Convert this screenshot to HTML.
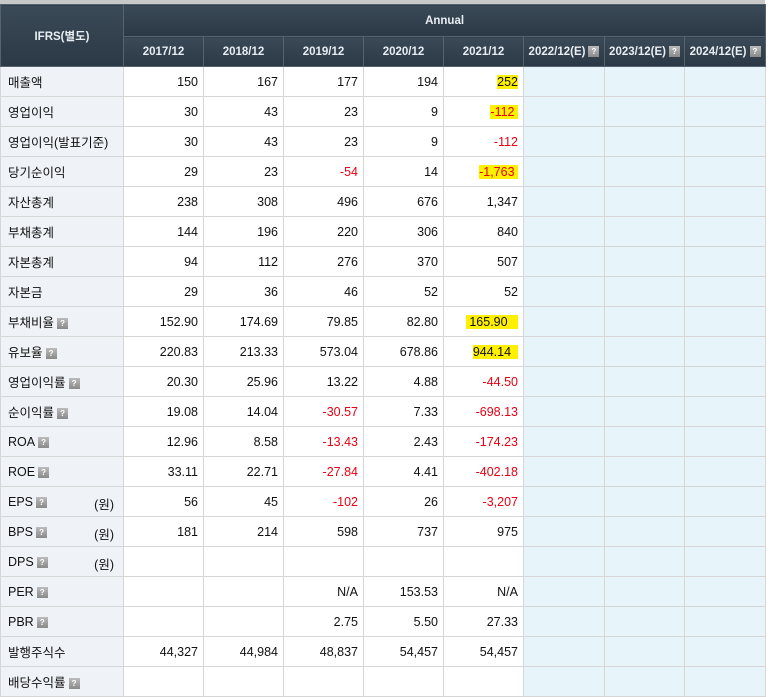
<!DOCTYPE html>
<html><head><meta charset="utf-8"><style>
body{margin:0;background:#fff;width:769px;height:696px;overflow:hidden;font-family:"Liberation Sans","Noto Sans CJK KR",sans-serif;}
.top{position:absolute;left:0;top:0;width:765px;height:4px;background:#c9c9c9}
table{position:absolute;left:0;top:4px;border-collapse:collapse;table-layout:fixed;width:765px;font-size:12.5px}
th{background:linear-gradient(#3b4a58,#2b3845);color:#e8edf2;font-weight:bold;font-size:11.5px;border:1px solid #56636f;padding:0;white-space:nowrap}
th.a{height:31px}
th.y{height:29px}
td{border:1px solid #d6d6d6;height:29px;padding:0 5px;text-align:right;color:#111;white-space:nowrap}
td.l{text-align:left;background:#eff2f7;padding-left:7px;color:#111;position:relative}
td.e{background:#e7f4fa}
.r{color:#e60012}
.q{display:inline-block;width:11px;height:11px;background:linear-gradient(#bbb,#8a8a8a);color:#fff;font-size:8px;line-height:11px;text-align:center;vertical-align:1px;margin-left:3px;font-weight:bold}
.u{position:absolute;right:9px;top:7px}
.h{background:#fff000}
</style></head><body>
<div class="top"></div>
<table>
<colgroup><col style="width:123px"><col style="width:80px"><col style="width:80px"><col style="width:80px"><col style="width:80px"><col style="width:80px"><col style="width:81px"><col style="width:80px"><col style="width:81px"></colgroup>
<tr><th rowspan="2">IFRS(별도)</th><th colspan="8" class="a">Annual</th></tr>
<tr><th class="y">2017/12</th><th class="y">2018/12</th><th class="y">2019/12</th><th class="y">2020/12</th><th class="y">2021/12</th><th class="y">2022/12(E)<span class="q">?</span></th><th class="y">2023/12(E)<span class="q">?</span></th><th class="y">2024/12(E)<span class="q">?</span></th></tr>
<tr><td class="l">매출액</td><td>150</td><td>167</td><td>177</td><td>194</td><td><span class="h">252</span></td><td class="e"></td><td class="e"></td><td class="e"></td></tr>
<tr><td class="l">영업이익</td><td>30</td><td>43</td><td>23</td><td>9</td><td class="r"><span class="h">-112&nbsp;</span></td><td class="e"></td><td class="e"></td><td class="e"></td></tr>
<tr><td class="l">영업이익(발표기준)</td><td>30</td><td>43</td><td>23</td><td>9</td><td class="r">-112</td><td class="e"></td><td class="e"></td><td class="e"></td></tr>
<tr><td class="l">당기순이익</td><td>29</td><td>23</td><td class="r">-54</td><td>14</td><td class="r"><span class="h">-1,763&nbsp;</span></td><td class="e"></td><td class="e"></td><td class="e"></td></tr>
<tr><td class="l">자산총계</td><td>238</td><td>308</td><td>496</td><td>676</td><td>1,347</td><td class="e"></td><td class="e"></td><td class="e"></td></tr>
<tr><td class="l">부채총계</td><td>144</td><td>196</td><td>220</td><td>306</td><td>840</td><td class="e"></td><td class="e"></td><td class="e"></td></tr>
<tr><td class="l">자본총계</td><td>94</td><td>112</td><td>276</td><td>370</td><td>507</td><td class="e"></td><td class="e"></td><td class="e"></td></tr>
<tr><td class="l">자본금</td><td>29</td><td>36</td><td>46</td><td>52</td><td>52</td><td class="e"></td><td class="e"></td><td class="e"></td></tr>
<tr><td class="l">부채비율<span class="q">?</span></td><td>152.90</td><td>174.69</td><td>79.85</td><td>82.80</td><td><span class="h">&nbsp;165.90&nbsp;&nbsp;&nbsp;</span></td><td class="e"></td><td class="e"></td><td class="e"></td></tr>
<tr><td class="l">유보율<span class="q">?</span></td><td>220.83</td><td>213.33</td><td>573.04</td><td>678.86</td><td><span class="h">944.14&nbsp;&nbsp;</span></td><td class="e"></td><td class="e"></td><td class="e"></td></tr>
<tr><td class="l">영업이익률<span class="q">?</span></td><td>20.30</td><td>25.96</td><td>13.22</td><td>4.88</td><td class="r">-44.50</td><td class="e"></td><td class="e"></td><td class="e"></td></tr>
<tr><td class="l">순이익률<span class="q">?</span></td><td>19.08</td><td>14.04</td><td class="r">-30.57</td><td>7.33</td><td class="r">-698.13</td><td class="e"></td><td class="e"></td><td class="e"></td></tr>
<tr><td class="l">ROA<span class="q">?</span></td><td>12.96</td><td>8.58</td><td class="r">-13.43</td><td>2.43</td><td class="r">-174.23</td><td class="e"></td><td class="e"></td><td class="e"></td></tr>
<tr><td class="l">ROE<span class="q">?</span></td><td>33.11</td><td>22.71</td><td class="r">-27.84</td><td>4.41</td><td class="r">-402.18</td><td class="e"></td><td class="e"></td><td class="e"></td></tr>
<tr><td class="l">EPS<span class="q">?</span><span class="u">(원)</span></td><td>56</td><td>45</td><td class="r">-102</td><td>26</td><td class="r">-3,207</td><td class="e"></td><td class="e"></td><td class="e"></td></tr>
<tr><td class="l">BPS<span class="q">?</span><span class="u">(원)</span></td><td>181</td><td>214</td><td>598</td><td>737</td><td>975</td><td class="e"></td><td class="e"></td><td class="e"></td></tr>
<tr><td class="l">DPS<span class="q">?</span><span class="u">(원)</span></td><td></td><td></td><td></td><td></td><td></td><td class="e"></td><td class="e"></td><td class="e"></td></tr>
<tr><td class="l">PER<span class="q">?</span></td><td></td><td></td><td>N/A</td><td>153.53</td><td>N/A</td><td class="e"></td><td class="e"></td><td class="e"></td></tr>
<tr><td class="l">PBR<span class="q">?</span></td><td></td><td></td><td>2.75</td><td>5.50</td><td>27.33</td><td class="e"></td><td class="e"></td><td class="e"></td></tr>
<tr><td class="l">발행주식수</td><td>44,327</td><td>44,984</td><td>48,837</td><td>54,457</td><td>54,457</td><td class="e"></td><td class="e"></td><td class="e"></td></tr>
<tr><td class="l">배당수익률<span class="q">?</span></td><td></td><td></td><td></td><td></td><td></td><td class="e"></td><td class="e"></td><td class="e"></td></tr>
</table>
</body></html>
